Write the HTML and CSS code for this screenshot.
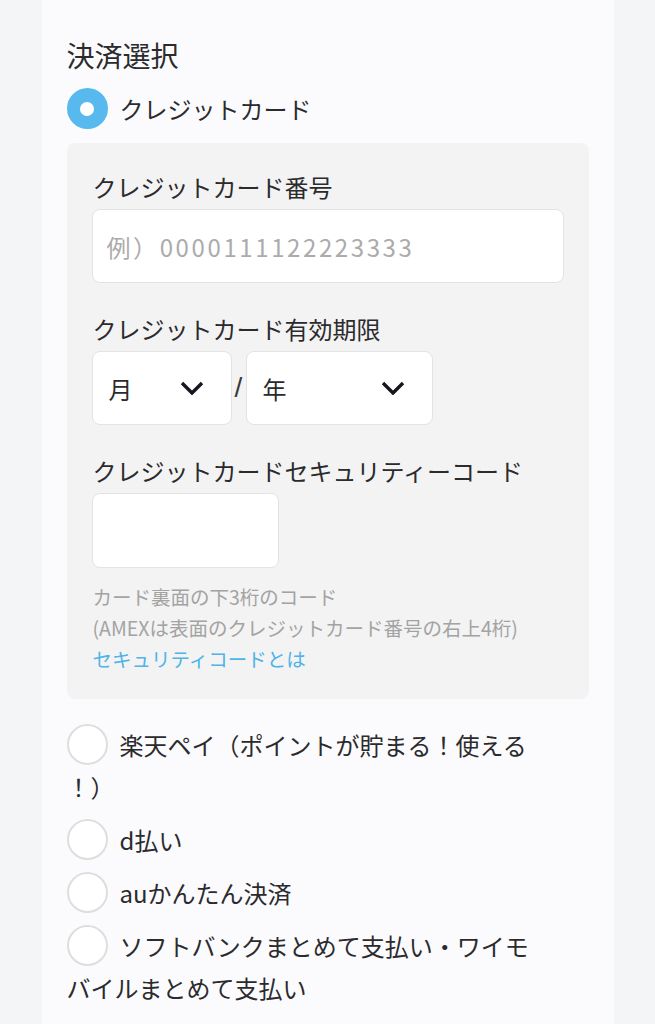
FILE: index.html
```html
<!DOCTYPE html>
<html lang="ja">
<head>
<meta charset="utf-8">
<title>決済選択</title>
<link rel="stylesheet" href="styles.css">
</head>
<body>
<div class="page">
  <section class="card">
    <h2 class="heading">決済選択</h2>

    <div class="option">
      <span class="radio radio-on"></span>クレジットカード
    </div>

    <div class="cc-box">
      <div class="field">
        <div class="label">クレジットカード番号</div>
        <input class="text-input wide" type="text" placeholder="例）0000111122223333">
      </div>

      <div class="field">
        <div class="label">クレジットカード有効期限</div>
        <div class="expiry">
          <div class="select month">
            <span>月</span>
            <svg class="chev" width="24" height="14" viewBox="0 0 24 14"><polyline points="2,2 12,12 22,2" fill="none" stroke="#16161e" stroke-width="3.4"/></svg>
          </div>
          <span class="slash">/</span>
          <div class="select year">
            <span>年</span>
            <svg class="chev" width="24" height="14" viewBox="0 0 24 14"><polyline points="2,2 12,12 22,2" fill="none" stroke="#16161e" stroke-width="3.4"/></svg>
          </div>
        </div>
      </div>

      <div class="field">
        <div class="label">クレジットカードセキュリティーコード</div>
        <input class="text-input short" type="text">
        <div class="help">
          <div>カード裏面の下3桁のコード</div>
          <div>(AMEXは表面のクレジットカード番号の右上4桁)</div>
          <div class="help-link">セキュリティコードとは</div>
        </div>
      </div>
    </div>

    <div class="options">
      <div class="option"><span class="radio"></span>楽天ペイ（ポイントが貯まる！使える<br>！）</div>
      <div class="option"><span class="radio"></span>d払い</div>
      <div class="option"><span class="radio"></span>auかんたん決済</div>
      <div class="option"><span class="radio"></span>ソフトバンクまとめて支払い・ワイモ<br>バイルまとめて支払い</div>
    </div>
  </section>
</div>
</body>
</html>
```

FILE: styles.css
```css
* { box-sizing: border-box; }

html, body {
  margin: 0;
  padding: 0;
  background: #f4f5f7;
}

body {
  font-family: "Noto Sans CJK JP", "Noto Sans", sans-serif;
  color: #2b2b2e;
}

.page {
  display: flex;
  justify-content: center;
  min-height: 1024px;
}

.card {
  width: 572px;
  background: #fbfbfd;
  padding: 35px 25px 40px 25px;
}

.heading {
  margin: 0 0 13px 0;
  font-size: 28px;
  font-weight: 400;
  line-height: 40px;
}

.option {
  font-size: 24px;
  line-height: 42px;
}

.radio {
  display: inline-block;
  width: 41px;
  height: 41px;
  border-radius: 50%;
  background: #ffffff;
  border: 2px solid #dedede;
  vertical-align: top;
  margin: 0 12px 0 0;
  position: relative;
}

.radio-on {
  background: #58b9ee;
  border-color: #58b9ee;
}

.radio-on::after {
  content: "";
  position: absolute;
  left: 50%;
  top: 50%;
  width: 14px;
  height: 14px;
  margin: -7px 0 0 -7px;
  border-radius: 50%;
  background: #ffffff;
}

.cc-box {
  margin-top: 13px;
  background: #f3f3f3;
  border-radius: 8px;
  padding: 26px 25px 25px 25px;
}

.field + .field {
  margin-top: 28px;
}

.label {
  font-size: 24px;
  line-height: 36px;
  margin-bottom: 4px;
  padding-left: 1px;
}

.text-input {
  display: block;
  height: 74px;
  background: #ffffff;
  border: 1.5px solid #e3e3e3;
  border-radius: 8px;
  font-family: inherit;
  font-size: 24px;
  letter-spacing: 2.6px;
  padding: 0 14px;
  color: #2b2b2e;
  outline: none;
}

.text-input::placeholder {
  color: #ababab;
}

.wide { width: 472px; }
.short { width: 187px; height: 75px; }

.expiry {
  display: flex;
  align-items: center;
}

.select {
  height: 74px;
  background: #ffffff;
  border: 1.5px solid #e3e3e3;
  border-radius: 8px;
  display: flex;
  align-items: center;
  justify-content: space-between;
  padding: 0 27px 0 16px;
  font-size: 24px;
}

.month { width: 140px; }
.year { width: 187px; }

.chev { display: block; }

.slash {
  width: 14px;
  text-align: center;
  font-size: 28px;
  font-family: "Liberation Sans", sans-serif;
  color: #3a3a3a;
}

.help {
  margin-top: 13px;
  font-size: 19.5px;
  line-height: 31px;
  color: #a3a3a3;
  padding-left: 1px;
}

.help-link {
  color: #4fb3e8;
}

.options {
  margin-top: 25px;
}

.options .option + .option {
  margin-top: 11px;
}
```
